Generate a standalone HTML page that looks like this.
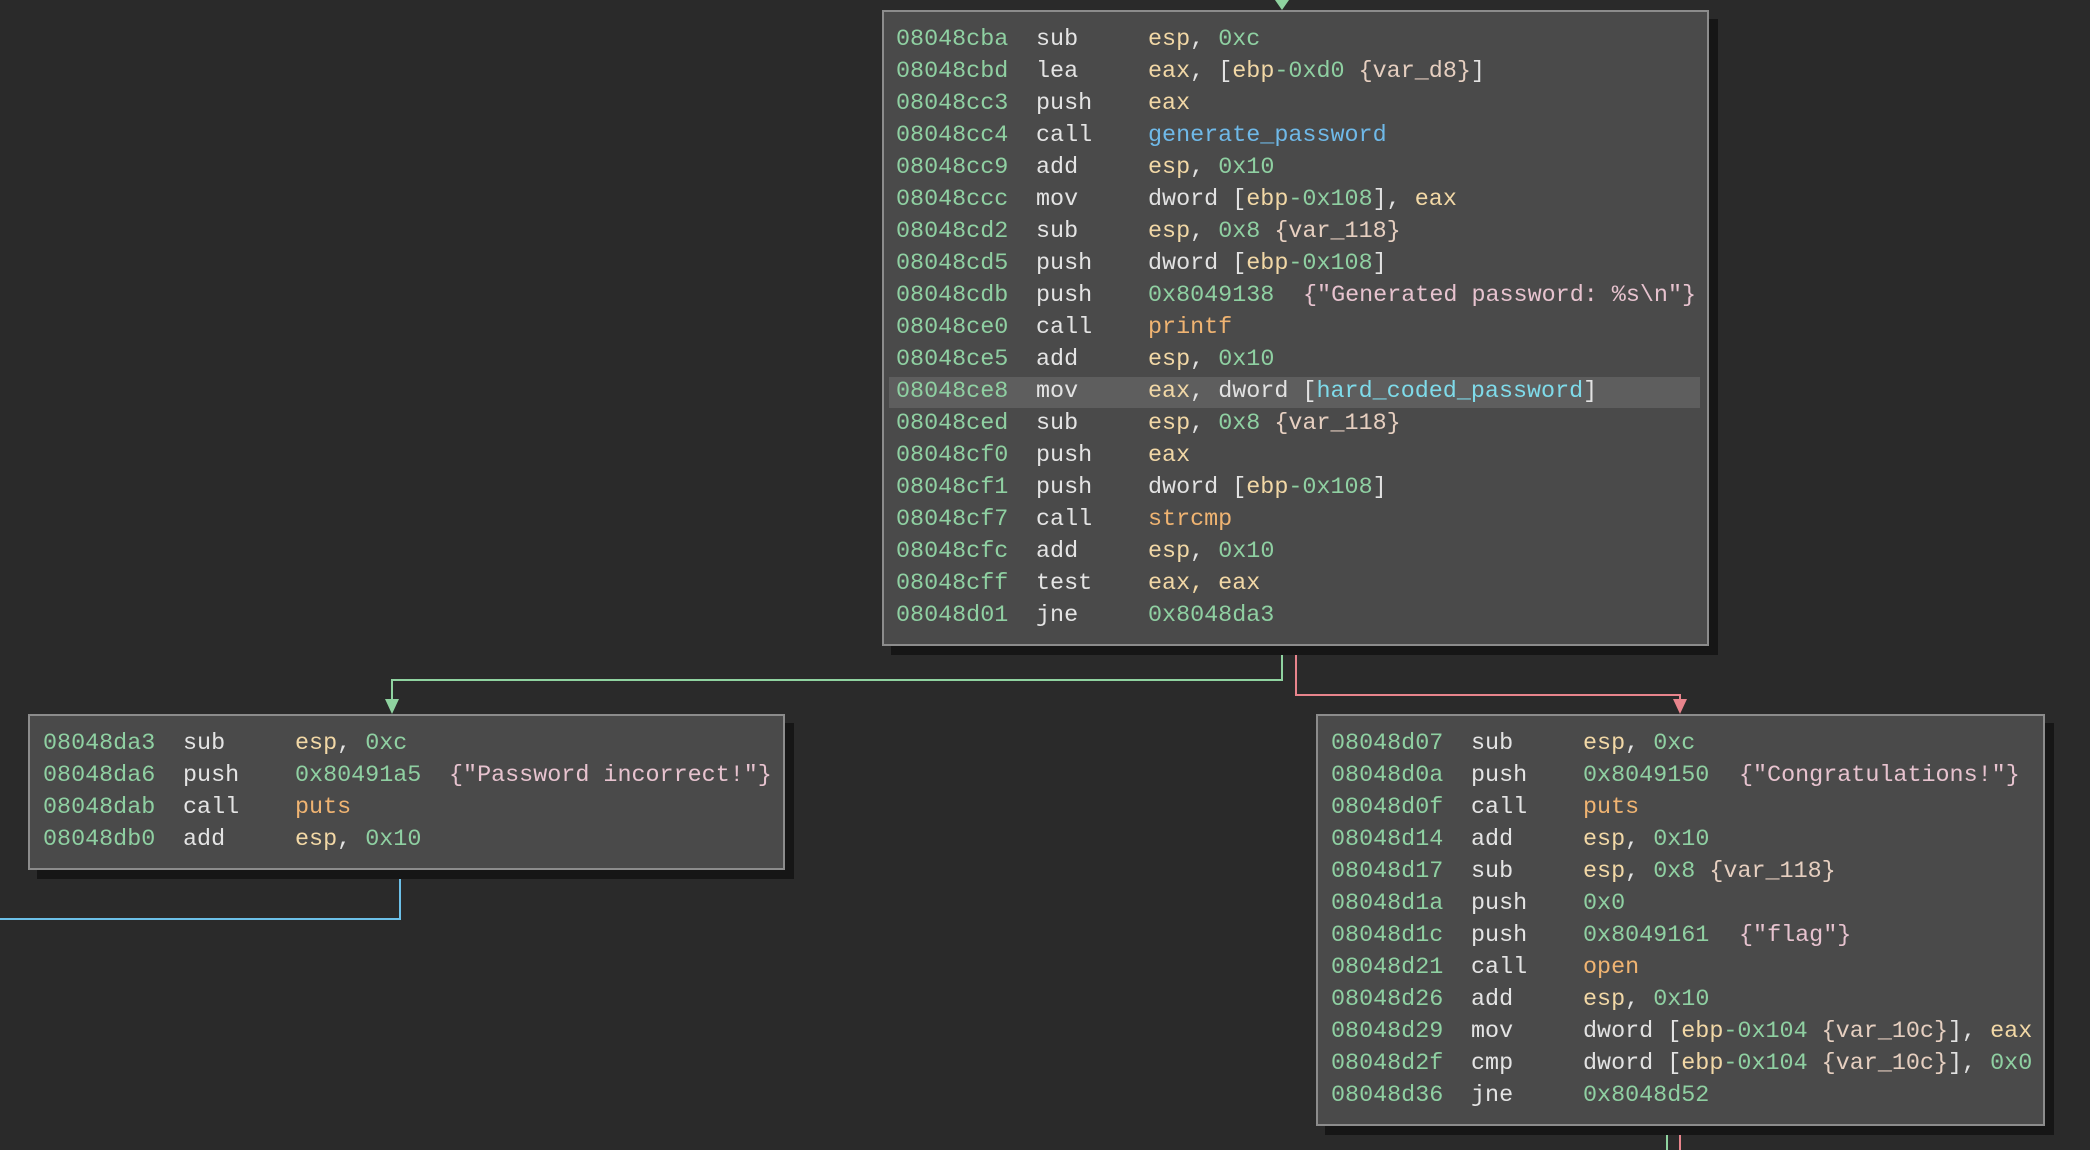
<!DOCTYPE html>
<html><head><meta charset="utf-8"><style>
*{margin:0;padding:0;box-sizing:border-box}
body{width:2090px;height:1150px;background:#2a2a2a;position:relative;overflow:hidden;font-family:"Liberation Mono","DejaVu Sans Mono",monospace;font-size:23.4px;color:#e2e2e2}
.box{position:absolute;background:#4a4a4a;border:2px solid #8c8c8c;box-shadow:9px 9px 0 #161616}
.r{position:absolute;height:32px;line-height:32px;white-space:pre}
.r span{position:absolute;top:0}
.a{color:#8fd0a2}.m{color:#e4e4e4}.g{color:#f2d8a6}.n{color:#8fd0a2}.w{color:#e4e4e4}.v{color:#e6cfc0}.s{color:#e7c3cf}.f{color:#6fb9e8}.i{color:#f0b472}.d{color:#7fdbea}
.hl{position:absolute;background:#5e5e5e}
.ln{position:absolute}
</style></head><body>
<!-- edges -->
<div class="ln" style="left:1281px;top:645px;width:2px;height:36px;background:#8fd3a0"></div>
<div class="ln" style="left:391px;top:679px;width:892px;height:2px;background:#8fd3a0"></div>
<div class="ln" style="left:391px;top:679px;width:2px;height:24px;background:#8fd3a0"></div>
<div class="ln" style="left:385px;top:699px;width:0;height:0;border-left:7px solid transparent;border-right:7px solid transparent;border-top:15px solid #8fd3a0"></div>
<div class="ln" style="left:1295px;top:645px;width:2px;height:51px;background:#e8848c"></div>
<div class="ln" style="left:1295px;top:694px;width:386px;height:2px;background:#e8848c"></div>
<div class="ln" style="left:1679px;top:694px;width:2px;height:10px;background:#e8848c"></div>
<div class="ln" style="left:1673px;top:699px;width:0;height:0;border-left:7px solid transparent;border-right:7px solid transparent;border-top:15px solid #e8848c"></div>
<div class="ln" style="left:1275px;top:0;width:0;height:0;border-left:7px solid transparent;border-right:7px solid transparent;border-top:10px solid #8fd3a0"></div>
<div class="ln" style="left:399px;top:869px;width:2px;height:51px;background:#6cc0e8"></div>
<div class="ln" style="left:0;top:918px;width:401px;height:2px;background:#6cc0e8"></div>
<div class="ln" style="left:1666px;top:1125px;width:2px;height:25px;background:#8fd3a0"></div>
<div class="ln" style="left:1679px;top:1125px;width:2px;height:25px;background:#e8848c"></div>

<!-- top box -->
<div class="box" style="left:882px;top:10px;width:827px;height:636px"></div>
<div class="hl" style="left:889px;top:377px;width:811px;height:31px"></div>
<div style="position:absolute;left:0;top:24px">
<div class="r" style="top:0"><span class="a" style="left:896px">08048cba</span><span class="m" style="left:1036px">sub</span><span style="left:1148px"><b class="g" style="font-weight:normal">esp</b>, <b class="n" style="font-weight:normal">0xc</b></span></div>
<div class="r" style="top:32px"><span class="a" style="left:896px">08048cbd</span><span class="m" style="left:1036px">lea</span><span style="left:1148px"><i class="g" style="font-style:normal">eax</i>, [<i class="g" style="font-style:normal">ebp</i><i class="n" style="font-style:normal">-0xd0</i> <i class="v" style="font-style:normal">{var_d8}</i>]</span></div>
<div class="r" style="top:64px"><span class="a" style="left:896px">08048cc3</span><span class="m" style="left:1036px">push</span><span class="g" style="left:1148px">eax</span></div>
<div class="r" style="top:96px"><span class="a" style="left:896px">08048cc4</span><span class="m" style="left:1036px">call</span><span class="f" style="left:1148px">generate_password</span></div>
<div class="r" style="top:128px"><span class="a" style="left:896px">08048cc9</span><span class="m" style="left:1036px">add</span><span style="left:1148px"><i class="g" style="font-style:normal">esp</i>, <i class="n" style="font-style:normal">0x10</i></span></div>
<div class="r" style="top:160px"><span class="a" style="left:896px">08048ccc</span><span class="m" style="left:1036px">mov</span><span style="left:1148px">dword [<i class="g" style="font-style:normal">ebp</i><i class="n" style="font-style:normal">-0x108</i>], <i class="g" style="font-style:normal">eax</i></span></div>
<div class="r" style="top:192px"><span class="a" style="left:896px">08048cd2</span><span class="m" style="left:1036px">sub</span><span style="left:1148px"><i class="g" style="font-style:normal">esp</i>, <i class="n" style="font-style:normal">0x8</i> <i class="v" style="font-style:normal">{var_118}</i></span></div>
<div class="r" style="top:224px"><span class="a" style="left:896px">08048cd5</span><span class="m" style="left:1036px">push</span><span style="left:1148px">dword [<i class="g" style="font-style:normal">ebp</i><i class="n" style="font-style:normal">-0x108</i>]</span></div>
<div class="r" style="top:256px"><span class="a" style="left:896px">08048cdb</span><span class="m" style="left:1036px">push</span><span class="n" style="left:1148px">0x8049138</span><span class="s" style="left:1303px">{"Generated password: %s\n"}</span></div>
<div class="r" style="top:288px"><span class="a" style="left:896px">08048ce0</span><span class="m" style="left:1036px">call</span><span class="i" style="left:1148px">printf</span></div>
<div class="r" style="top:320px"><span class="a" style="left:896px">08048ce5</span><span class="m" style="left:1036px">add</span><span style="left:1148px"><i class="g" style="font-style:normal">esp</i>, <i class="n" style="font-style:normal">0x10</i></span></div>
<div class="r" style="top:352px"><span class="a" style="left:896px">08048ce8</span><span class="m" style="left:1036px">mov</span><span style="left:1148px"><i class="g" style="font-style:normal">eax</i>, dword [<i class="d" style="font-style:normal">hard_coded_password</i>]</span></div>
<div class="r" style="top:384px"><span class="a" style="left:896px">08048ced</span><span class="m" style="left:1036px">sub</span><span style="left:1148px"><i class="g" style="font-style:normal">esp</i>, <i class="n" style="font-style:normal">0x8</i> <i class="v" style="font-style:normal">{var_118}</i></span></div>
<div class="r" style="top:416px"><span class="a" style="left:896px">08048cf0</span><span class="m" style="left:1036px">push</span><span class="g" style="left:1148px">eax</span></div>
<div class="r" style="top:448px"><span class="a" style="left:896px">08048cf1</span><span class="m" style="left:1036px">push</span><span style="left:1148px">dword [<i class="g" style="font-style:normal">ebp</i><i class="n" style="font-style:normal">-0x108</i>]</span></div>
<div class="r" style="top:480px"><span class="a" style="left:896px">08048cf7</span><span class="m" style="left:1036px">call</span><span class="i" style="left:1148px">strcmp</span></div>
<div class="r" style="top:512px"><span class="a" style="left:896px">08048cfc</span><span class="m" style="left:1036px">add</span><span style="left:1148px"><i class="g" style="font-style:normal">esp</i>, <i class="n" style="font-style:normal">0x10</i></span></div>
<div class="r" style="top:544px"><span class="a" style="left:896px">08048cff</span><span class="m" style="left:1036px">test</span><span class="g" style="left:1148px">eax, eax</span></div>
<div class="r" style="top:576px"><span class="a" style="left:896px">08048d01</span><span class="m" style="left:1036px">jne</span><span class="n" style="left:1148px">0x8048da3</span></div>
</div>

<!-- left box -->
<div class="box" style="left:28px;top:714px;width:757px;height:156px"></div>
<div style="position:absolute;left:0;top:728px">
<div class="r" style="top:0"><span class="a" style="left:43px">08048da3</span><span class="m" style="left:183px">sub</span><span style="left:295px"><i class="g" style="font-style:normal">esp</i>, <i class="n" style="font-style:normal">0xc</i></span></div>
<div class="r" style="top:32px"><span class="a" style="left:43px">08048da6</span><span class="m" style="left:183px">push</span><span class="n" style="left:295px">0x80491a5</span><span class="s" style="left:449px">{"Password incorrect!"}</span></div>
<div class="r" style="top:64px"><span class="a" style="left:43px">08048dab</span><span class="m" style="left:183px">call</span><span class="i" style="left:295px">puts</span></div>
<div class="r" style="top:96px"><span class="a" style="left:43px">08048db0</span><span class="m" style="left:183px">add</span><span style="left:295px"><i class="g" style="font-style:normal">esp</i>, <i class="n" style="font-style:normal">0x10</i></span></div>
</div>

<!-- right box -->
<div class="box" style="left:1316px;top:714px;width:729px;height:412px"></div>
<div style="position:absolute;left:0;top:728px">
<div class="r" style="top:0"><span class="a" style="left:1331px">08048d07</span><span class="m" style="left:1471px">sub</span><span style="left:1583px"><i class="g" style="font-style:normal">esp</i>, <i class="n" style="font-style:normal">0xc</i></span></div>
<div class="r" style="top:32px"><span class="a" style="left:1331px">08048d0a</span><span class="m" style="left:1471px">push</span><span class="n" style="left:1583px">0x8049150</span><span class="s" style="left:1739px">{"Congratulations!"}</span></div>
<div class="r" style="top:64px"><span class="a" style="left:1331px">08048d0f</span><span class="m" style="left:1471px">call</span><span class="i" style="left:1583px">puts</span></div>
<div class="r" style="top:96px"><span class="a" style="left:1331px">08048d14</span><span class="m" style="left:1471px">add</span><span style="left:1583px"><i class="g" style="font-style:normal">esp</i>, <i class="n" style="font-style:normal">0x10</i></span></div>
<div class="r" style="top:128px"><span class="a" style="left:1331px">08048d17</span><span class="m" style="left:1471px">sub</span><span style="left:1583px"><i class="g" style="font-style:normal">esp</i>, <i class="n" style="font-style:normal">0x8</i> <i class="v" style="font-style:normal">{var_118}</i></span></div>
<div class="r" style="top:160px"><span class="a" style="left:1331px">08048d1a</span><span class="m" style="left:1471px">push</span><span class="n" style="left:1583px">0x0</span></div>
<div class="r" style="top:192px"><span class="a" style="left:1331px">08048d1c</span><span class="m" style="left:1471px">push</span><span class="n" style="left:1583px">0x8049161</span><span class="s" style="left:1739px">{"flag"}</span></div>
<div class="r" style="top:224px"><span class="a" style="left:1331px">08048d21</span><span class="m" style="left:1471px">call</span><span class="i" style="left:1583px">open</span></div>
<div class="r" style="top:256px"><span class="a" style="left:1331px">08048d26</span><span class="m" style="left:1471px">add</span><span style="left:1583px"><i class="g" style="font-style:normal">esp</i>, <i class="n" style="font-style:normal">0x10</i></span></div>
<div class="r" style="top:288px"><span class="a" style="left:1331px">08048d29</span><span class="m" style="left:1471px">mov</span><span style="left:1583px">dword [<i class="g" style="font-style:normal">ebp</i><i class="n" style="font-style:normal">-0x104</i> <i class="v" style="font-style:normal">{var_10c}</i>], <i class="g" style="font-style:normal">eax</i></span></div>
<div class="r" style="top:320px"><span class="a" style="left:1331px">08048d2f</span><span class="m" style="left:1471px">cmp</span><span style="left:1583px">dword [<i class="g" style="font-style:normal">ebp</i><i class="n" style="font-style:normal">-0x104</i> <i class="v" style="font-style:normal">{var_10c}</i>], <i class="n" style="font-style:normal">0x0</i></span></div>
<div class="r" style="top:352px"><span class="a" style="left:1331px">08048d36</span><span class="m" style="left:1471px">jne</span><span class="n" style="left:1583px">0x8048d52</span></div>
</div>
</body></html>
